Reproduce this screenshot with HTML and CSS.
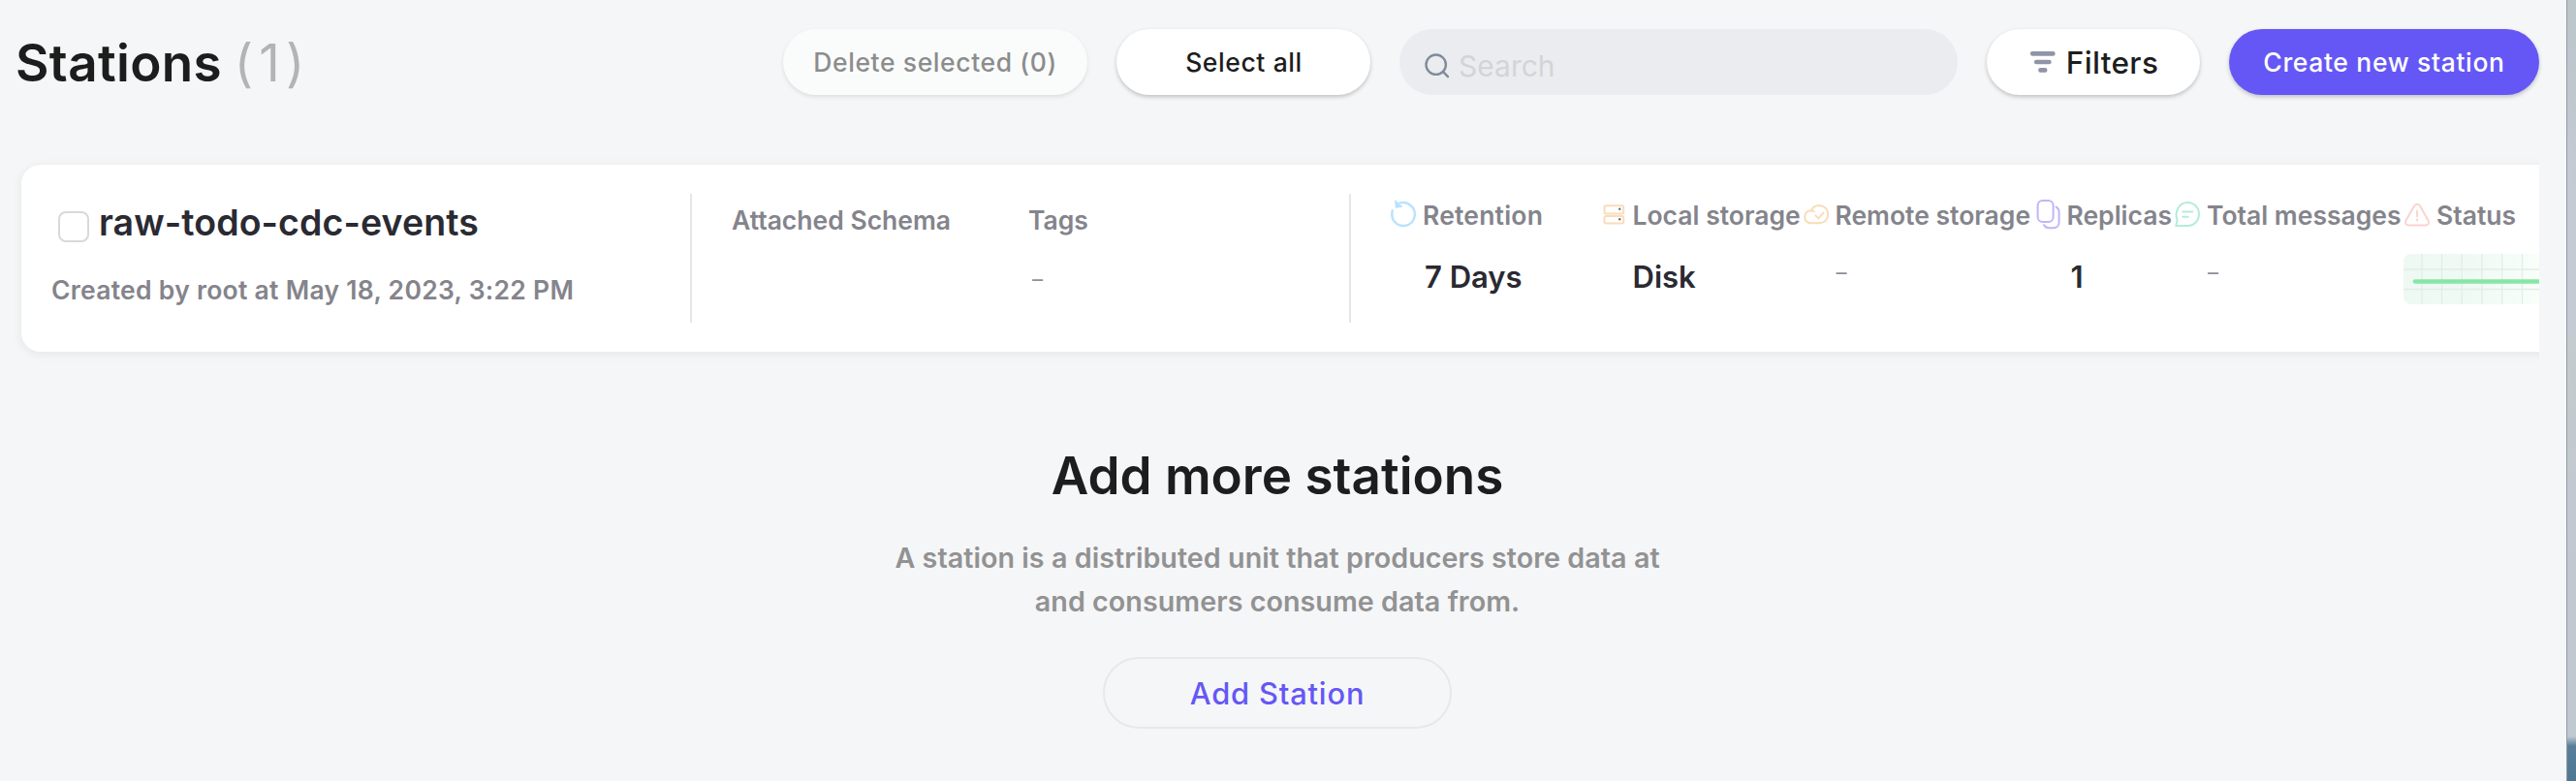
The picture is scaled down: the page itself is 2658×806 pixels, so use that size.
FILE: index.html
```
<!DOCTYPE html>
<html lang="en">
<head>
<meta charset="utf-8">
<title>Stations</title>
<link rel="stylesheet" href="styles.css">
</head>
<body>
<div class="page">
  <main class="main">
    <header class="header">
      <h1 class="title">Stations <span class="count">(1)</span></h1>
      <div class="actions">
        <button class="btn btn-delete" disabled>Delete selected (0)</button>
        <button class="btn btn-select">Select all</button>
        <div class="search">
          <svg class="search-icon" viewBox="0 0 26 26"><circle cx="11.7" cy="11.7" r="10.2"/><path d="M19.2 19.2l4.8 5"/></svg>
          <span class="search-hint">Search</span>
        </div>
        <button class="btn btn-filters">
          <svg class="filter-icon" viewBox="0 0 26 22"><path d="M2.2 2.4h21.2M6.2 11h13.2M10.4 19.4h4.8"/></svg>
          <span>Filters</span>
        </button>
        <button class="btn btn-create">Create new station</button>
      </div>
    </header>

    <div class="list">
      <section class="card">
        <div class="station">
          <div class="name-row"><span class="checkbox"></span><span class="name">raw-todo-cdc-events</span></div>
          <div class="created">Created by root at May 18, 2023, 3:22 PM</div>
        </div>
        <div class="meta">
          <div class="meta-schema"><div class="label schema-label">Attached Schema</div></div>
          <div class="meta-tags"><div class="label tags-label">Tags</div><div class="dash">–</div></div>
        </div>
        <div class="stats">
          <div class="stat">
            <div class="stat-head">
              <svg class="icon icon-blue" viewBox="0 0 26 32"><path d="M1.7 12.2C.3 18.2 2.400 23.400 6.600 26.200C11.500 29.300 18.200 28.400 21.900 24.300C25.800 19.900 25.800 13.200 22.600 9.100C19.600 5.200 14.500 3.200 9.500 4.300"/><path class="head" d="M4.600 2.200L5.300 9.300L11.500 8.300Z"/></svg>
              <span class="label ls-wide">Retention</span>
            </div>
            <div class="value value-days">7 Days</div>
          </div>
          <div class="stat">
            <div class="stat-head">
              <svg class="icon icon-orange" viewBox="0 0 26 32"><rect x="3.500" y="7.200" width="19.700" height="8.200" rx="1.500"/><rect x="3.500" y="18" width="19.700" height="7.600" rx="1.500"/><circle class="dot" cx="19.200" cy="10.800" r="1.200"/><circle class="dot" cx="19.200" cy="21.300" r="1.200"/></svg>
              <span class="label">Local storage</span>
            </div>
            <div class="value value-disk">Disk</div>
          </div>
          <div class="stat">
            <div class="stat-head">
              <svg class="icon icon-orange" viewBox="0 0 26 32"><path d="M7.900 12.300C9.300 8.800 12.600 6.800 16.400 6.900C21.500 7.200 25.200 11 25.200 16C25.200 21.300 21.600 25.300 16.600 25.300H7.200C3.800 25.300 1.200 22.700 1.200 18.900C1.200 15.200 3.700 12.400 7.900 12.300C9.100 12.300 9.900 12.700 10.700 13.300M12.200 17.200L15.400 20.400L20.500 14.600"/></svg>
              <span class="label">Remote storage</span>
            </div>
            <div class="dash">–</div>
          </div>
          <div class="stat">
            <div class="stat-head">
              <svg class="icon icon-purple" viewBox="0 0 26 32"><rect x="2.600" y="2" width="16" height="22" rx="5"/><path d="M21.600 8.600C23.600 9.800 24.600 11.200 24.600 13.400V24.600C24.600 27.800 22.200 30.200 19 30.200H14.600C12 30.200 10 29.200 9 27.200"/></svg>
              <span class="label">Replicas</span>
            </div>
            <div class="value value-one">1</div>
          </div>
          <div class="stat">
            <div class="stat-head">
              <svg class="icon icon-green" viewBox="0 0 26 32"><path d="M1.200 28L2.600 22.400C-.7 13.500 4.500 4 13.300 4C20 4 25 9.400 25 16C25 22.600 20 28 13.300 28ZM8.200 13.400H18.200M8.200 18.800H13.800"/></svg>
              <span class="label">Total messages</span>
            </div>
            <div class="dash">–</div>
          </div>
          <div class="stat">
            <div class="stat-head">
              <svg class="icon icon-red" viewBox="0 0 26 32"><path d="M10.300 7.300C11.600 5.300 14.600 5.300 15.900 7.300L24.500 22.400C25.900 25 24.300 27.500 21.500 27.500H4.500C1.700 27.500 .1 25 1.500 22.400ZM13.100 12.600V18.200M13.100 21.200V22.600"/></svg>
              <span class="label">Status</span>
            </div>
            <svg class="graph" viewBox="0 0 180 52">
              <defs><linearGradient id="fade"><stop offset="0" stop-color="#eef9f3"/><stop offset=".4" stop-color="#f0faf4"/><stop offset=".78" stop-color="#f9fef9"/></linearGradient></defs>
              <rect width="180" height="52" rx="8" fill="url(#fade)"/>
              <path class="grid-lines" d="M19 0V52M39.600 0V52M60.300 0V52M81 0V52M101.700 0V52M122.500 0V52M0 16H180M0 36.500H180"/>
              <path class="trend" d="M12 28.500H180"/>
            </svg>
          </div>
        </div>
      </section>
    </div>

    <section class="empty">
      <h2 class="empty-title">Add more stations</h2>
      <p class="empty-text">A station is a distributed unit that producers store data at<br>and consumers consume data from.</p>
      <button class="btn-add">Add Station</button>
    </section>
  </main>
  <aside class="edge"></aside>
</div>
</body>
</html>
```
FILE: styles.css
```
* { box-sizing: border-box; }
body { margin: 0; background: #f5f6f8; font-family: Inter, "Liberation Sans", sans-serif; }
h1, h2, p { margin: 0; }
button { font-family: inherit; padding: 0; border: 0; }

.page { display: flex; width: 2658px; height: 806px; overflow: hidden; }
.main { flex: none; width: 2648px; height: 806px; }
.edge {
  flex: none; width: 10px; height: 806px;
  border-left: 1px solid #929ba2;
  background: linear-gradient(#bbc5ca 0, #c5cbd3 200px, #c5cbd3 340px, #c3cbcd 360px, #c3c9d0 500px, #bfc7cf 760px, #587e9a 770px, #4e7892 806px);
}

.header { display: flex; justify-content: space-between; padding: 30px 28px 0 16px; height: 98px; }
.title { font-size: 53px; font-weight: 600; line-height: 70px; letter-spacing: 0.35px; color: #1d1d1d; white-space: nowrap; }
.count { font-weight: 400; letter-spacing: 6.2px; color: #b4b4b4; margin-left: -1px; }
.actions { display: flex; gap: 30px; }

.btn {
  height: 68px; border-radius: 34px; background: #fff; color: #1d1d1d;
  font-size: 26.5px; font-weight: 500; letter-spacing: 0.6px;
  box-shadow: 0 2px 4px rgba(0, 0, 0, .22);
}
.btn-delete { width: 314px; background: #fafcfc; color: #8c8c8c; box-shadow: 0 2px 4px rgba(0, 0, 0, .1); }
.btn-select { width: 262px; padding-left: 1px; }
.btn-filters { display: flex; align-items: center; justify-content: center; gap: 11px; width: 220px; padding-left: 2px; font-size: 31.5px; letter-spacing: 0.35px; }
.filter-icon { width: 26px; height: 22px; fill: none; stroke: #9094a8; stroke-width: 4.600; stroke-linecap: round; }
.btn-create { width: 320px; background: #6557f5; color: #fff; letter-spacing: 0.65px; }

.search { display: flex; align-items: center; width: 576px; height: 68px; padding: 8px 0 0 26px; border-radius: 34px; background: #ebecf0; }
.search-icon { width: 26px; height: 26px; margin-right: 9px; fill: none; stroke: #818c99; stroke-width: 2.400; stroke-linecap: round; }
.search-hint { font-size: 30px; line-height: 40px; color: #d3d4d6; }

.list { width: 2620px; height: 240px; margin-top: 40px; padding: 32px 0 0 22px; overflow: hidden; }
.card {
  display: flex; width: 2700px; height: 193px; padding-top: 30px;
  border-radius: 20px; background: #fff; box-shadow: 0 2px 10px 2px rgba(0, 0, 0, .05);
}
.station { width: 692px; height: 133px; padding: 10px 0 0 31px; border-right: 2px solid #e6e6e6; }
.name-row { display: flex; align-items: center; height: 40px; }
.checkbox { width: 32px; height: 32px; margin: 8px 10px 0 7px; border: 2px solid #d9d9d9; border-radius: 8px; }
.name { font-size: 37.5px; font-weight: 600; line-height: 40px; letter-spacing: 0.08px; color: #2a2a32; }
.created { margin-top: 29px; font-size: 26.5px; font-weight: 600; line-height: 41px; letter-spacing: 0.28px; color: #84848c; white-space: nowrap; }

.label { font-size: 26.5px; font-weight: 600; line-height: 32px; color: #84848c; white-space: nowrap; }
.ls-wide { letter-spacing: 0.2px; }
.dash { font-size: 22px; line-height: 26px; color: #8e8e96; }

.meta { display: flex; width: 680px; height: 133px; padding: 11px 0 0 41px; border-right: 2px solid #e6e6e6; }
.meta-schema { width: 306px; }
.meta-tags .dash { margin: 32px 0 0 4px; }

.stats { display: grid; grid-template-columns: 216.5px 209px 239px 144.5px 237px 180px; padding: 5px 0 0 41px; }
.stat-head { display: flex; align-items: center; gap: 7px; height: 32px; }
.stat-head .label { padding-top: 1px; }
.icon { flex: none; width: 26px; height: 32px; overflow: visible; fill: none; stroke-width: 2; stroke-linecap: round; stroke-linejoin: round; }
.icon-blue { stroke: #b9e2fe; stroke-width: 2.400; }
.icon-blue .head { fill: #b9e2fe; stroke-width: 1; }
.icon-orange { stroke: #fadcb8; }
.icon-orange .dot { fill: #6d6d75; stroke: none; }
.icon-purple { stroke: #bfb6f9; }
.icon-green { stroke: #b5ebdc; }
.icon-red { stroke: #fbd3cf; }
.value { margin: 30px 0 0 35px; font-size: 31px; font-weight: 600; line-height: 38px; color: #2a2a32; }
.value-disk { margin-left: 33px; }
.value-one { margin-left: 37px; }
.stats .dash { margin: 31px 0 0 34px; }
.graph { display: block; width: 180px; height: 52px; margin: 25px 0 0 -1px; }
.grid-lines { fill: none; stroke: #e3ede7; stroke-width: 1.300; }
.trend { fill: none; stroke: #87e6a6; stroke-width: 4.600; stroke-linecap: round; }

.empty { display: flex; flex-direction: column; align-items: center; margin-top: 83px; padding-right: 12px; text-align: center; }
.empty-title { font-size: 53px; font-weight: 600; line-height: 60px; color: #1d1d1d; }
.empty-text { margin-top: 32px; font-size: 28.7px; font-weight: 600; line-height: 45px; letter-spacing: 0.04px; color: #929292; white-space: nowrap; }
.btn-add {
  width: 360px; height: 74px; margin-top: 35px; border: 2px solid #e7e8ea; border-radius: 37px;
  background: transparent; color: #6557f5; font-size: 30.8px; font-weight: 500; letter-spacing: 0.85px;
}
```
